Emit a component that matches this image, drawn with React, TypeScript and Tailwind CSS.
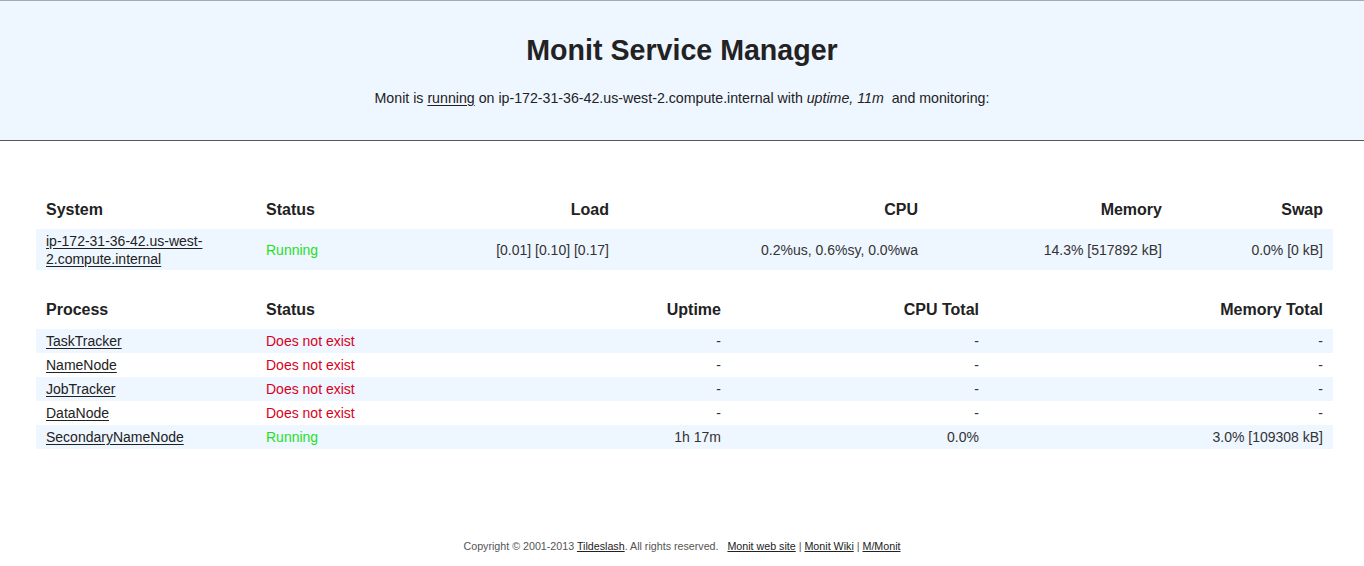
import React from "react";

const sysCols = "grid grid-cols-[220px_150px_213px_309px_244px_161px]";
const procCols = "grid grid-cols-[220px_200px_275px_258px_344px]";

const link = "underline text-[#222] underline-offset-2";

type Proc = { name: string; running: boolean; uptime: string; cpu: string; mem: string };

const procs: Proc[] = [
  { name: "TaskTracker", running: false, uptime: "-", cpu: "-", mem: "-" },
  { name: "NameNode", running: false, uptime: "-", cpu: "-", mem: "-" },
  { name: "JobTracker", running: false, uptime: "-", cpu: "-", mem: "-" },
  { name: "DataNode", running: false, uptime: "-", cpu: "-", mem: "-" },
  { name: "SecondaryNameNode", running: true, uptime: "1h 17m", cpu: "0.0%", mem: "3.0% [109308 kB]" },
];

export default function App() {
  return (
    <div
      className="w-[1364px] min-h-[566px] bg-white text-[#222]"
      style={{ fontFamily: '"Liberation Sans", Arial, sans-serif' }}
    >
      <div className="h-[141px] border-t border-b border-t-[#a4abb3] border-b-[#555] bg-[#eef6ff] flex flex-col items-center">
        <h1 className="mt-[33px] text-[28.6px] leading-[32px] font-bold text-[#222]">Monit Service Manager</h1>
        <p className="mt-[23px] text-[14.2px] leading-[18px] text-[#222]">
          Monit is <span className="underline underline-offset-2">running</span> on ip-172-31-36-42.us-west-2.compute.internal with{" "}
          <i>uptime, 11m</i>&nbsp; and monitoring:
        </p>
      </div>

      <div className="ml-[36px] mt-[49px] w-[1297px]">
        <div className={`${sysCols} h-[39px] items-center text-[16px] font-bold text-[#222]`}>
          <div className="px-[10px]">System</div>
          <div className="px-[10px]">Status</div>
          <div className="px-[10px] text-right">Load</div>
          <div className="px-[10px] text-right">CPU</div>
          <div className="px-[10px] text-right">Memory</div>
          <div className="px-[10px] text-right">Swap</div>
        </div>
        <div className={`${sysCols} h-[41px] items-center bg-[#eef6ff] text-[14px] leading-[18px] text-[#333]`}>
          <div className="px-[10px]">
            <a className={link}>ip-172-31-36-42.us-west-2.compute.internal</a>
          </div>
          <div className="px-[10px] text-[#1fdf1f]">Running</div>
          <div className="px-[10px] text-right">[0.01] [0.10] [0.17]</div>
          <div className="px-[10px] text-right">0.2%us, 0.6%sy, 0.0%wa</div>
          <div className="px-[10px] text-right">14.3% [517892 kB]</div>
          <div className="px-[10px] text-right">0.0% [0 kB]</div>
        </div>

        <div className={`${procCols} mt-[20px] h-[39px] items-center text-[16px] font-bold text-[#222]`}>
          <div className="px-[10px]">Process</div>
          <div className="px-[10px]">Status</div>
          <div className="px-[10px] text-right">Uptime</div>
          <div className="px-[10px] text-right">CPU Total</div>
          <div className="px-[10px] text-right">Memory Total</div>
        </div>
        {procs.map((p, i) => (
          <div
            key={p.name}
            className={`${procCols} h-[24px] items-center text-[14px] leading-[18px] text-[#333] ${
              i % 2 === 0 ? "bg-[#eef6ff]" : "bg-white"
            }`}
          >
            <div className="px-[10px]">
              <a className={link}>{p.name}</a>
            </div>
            <div className={`px-[10px] ${p.running ? "text-[#1fdf1f]" : "text-[#d9001b]"}`}>
              {p.running ? "Running" : "Does not exist"}
            </div>
            <div className="px-[10px] text-right">{p.uptime}</div>
            <div className="px-[10px] text-right">{p.cpu}</div>
            <div className="px-[10px] text-right">{p.mem}</div>
          </div>
        ))}
      </div>

      <div className="mt-[90px] flex justify-center text-[10.7px] leading-[14px] text-[#555]">
        <p>
          Copyright © 2001-2013 <a className="underline text-[#222]">Tildeslash</a>. All rights reserved.&nbsp;&nbsp;{" "}
          <a className="underline text-[#222]">Monit web site</a> | <a className="underline text-[#222]">Monit Wiki</a> |{" "}
          <a className="underline text-[#222]">M/Monit</a>
        </p>
      </div>
    </div>
  );
}
